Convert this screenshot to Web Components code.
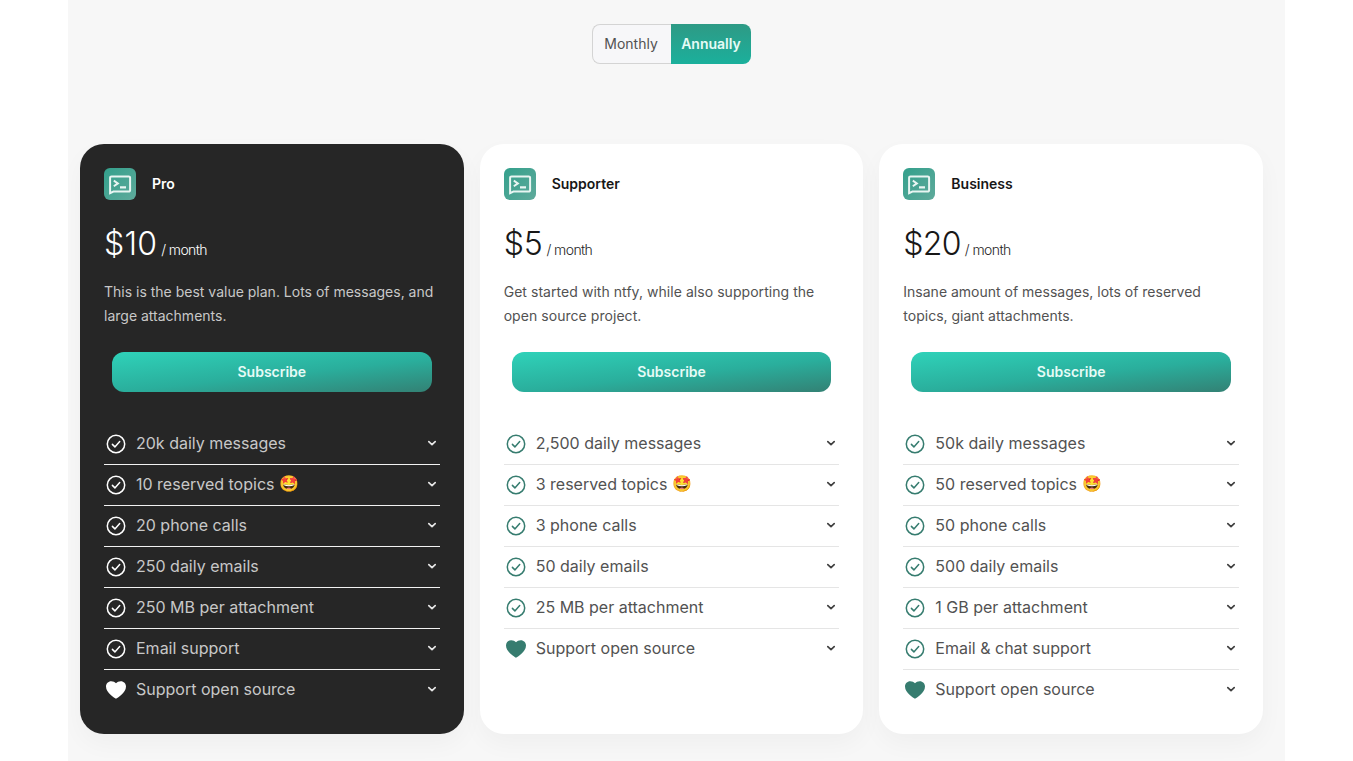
<!DOCTYPE html>
<html lang="en"><head><meta charset="utf-8"><title>Pricing</title>
<style>
html,body{margin:0;padding:0;background:#fff;font-family:Inter,"Liberation Sans",sans-serif;height:761px;overflow:hidden}
</style></head><body>
<template id="t-page"><style>
:host{display:block;margin-left:68px;width:1217px;height:761px;background:#f7f7f7;box-sizing:border-box;padding:24px 22px 0 12px;overflow:hidden}
.top{display:flex;justify-content:center}
.grid{display:grid;grid-template-columns:repeat(3,1fr);gap:16px;margin-top:80px}
</style><div class="top"><slot name="toggle"></slot></div><div class="grid"><slot></slot></div></template>

<template id="t-toggle"><style>
:host{display:flex;height:40px;font-size:14px;line-height:20px}
span{display:flex;align-items:center;box-sizing:border-box}
.m{width:79px;justify-content:center;padding-right:2px;color:#525252;background:#f7f7f9;border:1px solid #d4d4d4;border-right:0;border-radius:8px 0 0 8px}
.a{width:80px;justify-content:center;color:#e6fbf6;font-weight:600;background:linear-gradient(180deg,#2e9a85,#1bb09c);border-radius:0 8px 8px 0}
</style><span class="m">Monthly</span><span class="a">Annually</span></template>

<template id="t-card"><style>
:host{display:block;box-sizing:border-box;height:590px;padding:24px;background:#fff;border-radius:24px;color:#525252;box-shadow:0 10px 25px rgba(0,0,0,.035)}
:host([dark]){background:#262626;color:#c8c8c8;--h:#fff;--line:#f2f2f2;--ic:#fff;--chev:#e5e5e5;--pr:#fff}
.head{display:flex;align-items:center;gap:16px;height:32px}
.logo{width:32px;height:32px;border-radius:6px;background:linear-gradient(135deg,#33a08c,#5faa9b);display:block}
.name{font-size:14px;font-weight:600;color:var(--h,#171717);line-height:20px}
.price{display:flex;align-items:baseline;margin-top:24px;height:40px;line-height:40px;color:var(--pr,#171717)}
.amt{font-size:32px;font-weight:300;letter-spacing:var(--as,-.2px)}
.per{font-size:14px;font-weight:300;margin-left:4px;letter-spacing:-.6px;color:var(--pr,#262626)}
p{margin:16px 0 0;font-size:14px;line-height:24px;height:48px;letter-spacing:var(--ds,0)}
.btn{display:flex;align-items:center;justify-content:center;box-sizing:border-box;padding-bottom:2px;height:40px;margin:24px 8px 0;border-radius:12px;font-size:14px;font-weight:600;color:#e6fbf6;background:linear-gradient(174deg,#2fd2b9 0%,#2aae9c 55%,#338174 100%)}
ul{list-style:none;margin:32px 0 0;padding:0}
</style>
<div class="head"><svg class="logo" viewBox="0 0 32 32" fill="none"><path d="M7.500 8.400h17.200a1.400 1.400 0 0 1 1.400 1.400v12.400a1.400 1.400 0 0 1-1.400 1.400H9.400L6.100 25.200V9.800A1.400 1.400 0 0 1 7.500 8.400Z" stroke="#e8f5f2" stroke-width="2"/><path d="M9.800 12.600l4.100 2.800-4.100 2.800" stroke="#e8f5f2" stroke-width="1.900"/><path d="M16 19.400h6" stroke="#e8f5f2" stroke-width="2.100"/></svg><span class="name"></span></div>
<div class="price"><span class="amt"></span><span class="per">/ month</span></div>
<p></p>
<div class="btn">Subscribe</div>
<ul><slot></slot></ul></template>

<template id="t-item"><style>
:host{display:flex;align-items:center;box-sizing:border-box;height:41px;border-bottom:1px solid var(--line,#e5e5e5);font-size:16px;line-height:24px}
:host(:last-child){border-bottom-color:transparent}
svg.i{width:24px;height:24px;flex:none;margin-right:8px;color:var(--ic,#367c6f)}
.t{flex:1;display:flex;align-items:center;white-space:pre;margin-top:-2px}
svg.c{width:16px;height:16px;flex:none;color:var(--chev,#404040);margin-top:-3px}
</style><svg class="i" viewBox="0 0 24 24" fill="none"></svg><span class="t"><slot></slot></span><svg class="c" viewBox="0 0 16 16" fill="none"><path d="M4.800 6.600 8 9.700l3.200-3.100" stroke="currentColor" stroke-width="1.700" stroke-linecap="round" stroke-linejoin="round"/></svg></template>

<template id="t-emoji"><style>
:host{display:inline-block;margin-left:5px;font-family:"Noto Color Emoji",Inter,sans-serif;font-size:16px;line-height:24px}
</style><slot></slot></template>

<pricing-page>
<billing-toggle slot="toggle"></billing-toggle>
<plan-card dark style="--as:.2px" name="Pro" price="$10" desc="This is the best value plan. Lots of messages, and large attachments.">
<plan-item>20k daily messages</plan-item><plan-item>10 reserved topics<star-emoji>🤩</star-emoji></plan-item><plan-item>20 phone calls</plan-item><plan-item>250 daily emails</plan-item><plan-item>250 MB per attachment</plan-item><plan-item>Email support</plan-item><plan-item heart>Support open source</plan-item>
</plan-card>
<plan-card style="--ds:.05px" name="Supporter" price="$5" desc="Get started with ntfy, while also supporting the open source project.">
<plan-item>2,500 daily messages</plan-item><plan-item>3 reserved topics<star-emoji>🤩</star-emoji></plan-item><plan-item>3 phone calls</plan-item><plan-item>50 daily emails</plan-item><plan-item>25 MB per attachment</plan-item><plan-item heart>Support open source</plan-item>
</plan-card>
<plan-card style="--as:-.7px" name="Business" price="$20" desc="Insane amount of messages, lots of reserved topics, giant attachments.">
<plan-item>50k daily messages</plan-item><plan-item>50 reserved topics<star-emoji>🤩</star-emoji></plan-item><plan-item>50 phone calls</plan-item><plan-item>500 daily emails</plan-item><plan-item>1 GB per attachment</plan-item><plan-item>Email &amp; chat support</plan-item><plan-item heart>Support open source</plan-item>
</plan-card>
</pricing-page>
<script>
function mk(tag,id,init){customElements.define(tag,class extends HTMLElement{constructor(){super();const s=this.attachShadow({mode:'open'});s.appendChild(document.getElementById(id).content.cloneNode(true));}connectedCallback(){init&&init(this,this.shadowRoot)}})}
mk('pricing-page','t-page');mk('billing-toggle','t-toggle');mk('star-emoji','t-emoji');
mk('plan-card','t-card',(h,s)=>{s.querySelector('.name').textContent=h.getAttribute('name');s.querySelector('.amt').textContent=h.getAttribute('price');s.querySelector('p').textContent=h.getAttribute('desc')});
mk('plan-item','t-item',(h,s)=>{s.querySelector('.i').innerHTML=h.hasAttribute('heart')?'<path d="M12 20.800C10.800 20 2 15.200 2 8.600 2 5.500 4.300 3.200 7.200 3.200c2 0 3.700.8 4.800 2 1.100-1.200 2.800-2 4.800-2C19.700 3.200 22 5.500 22 8.600c0 6.600-8.800 11.400-10 12.200Z" fill="currentColor"/>':'<circle cx="12" cy="12" r="8.700" stroke="currentColor" stroke-width="1.500"/><path d="M8.400 12.400l2.500 2.500 4.800-5.300" stroke="currentColor" stroke-width="1.500" stroke-linecap="round" stroke-linejoin="round"/>'});
</script>
</body></html>
